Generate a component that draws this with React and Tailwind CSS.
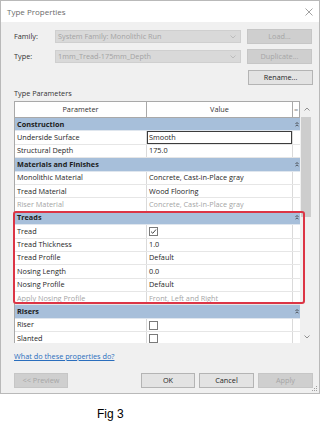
import React from "react";

const rows = [
  { group: true, label: "Construction" },
  { label: "Underside Surface", value: "Smooth", edit: true },
  { label: "Structural Depth", value: "175.0" },
  { group: true, label: "Materials and Finishes" },
  { label: "Monolithic Material", value: "Concrete, Cast-in-Place gray" },
  { label: "Tread Material", value: "Wood Flooring" },
  { label: "Riser Material", value: "Concrete, Cast-in-Place gray", muted: true },
  { group: true, label: "Treads" },
  { label: "Tread", check: true, checked: true },
  { label: "Tread Thickness", value: "1.0" },
  { label: "Tread Profile", value: "Default" },
  { label: "Nosing Length", value: "0.0" },
  { label: "Nosing Profile", value: "Default" },
  { label: "Apply Nosing Profile", value: "Front, Left and Right", muted: true },
  { group: true, label: "Risers" },
  { label: "Riser", check: true },
  { label: "Slanted", check: true },
];

function Chevron({ className = "" }) {
  return (
    <svg width="6" height="4" viewBox="0 0 6 4" className={className}>
      <path d="M0.5 0.5 L3 3 L5.5 0.5" fill="none" stroke="currentColor" strokeWidth="0.8" />
    </svg>
  );
}

function Combo({ text }) {
  return (
    <div className="flex items-center justify-between w-[186px] h-[13px] bg-[#d9d9d9] border border-[#cfcfcf] pl-[2px] pr-[4px] text-[#a3a3a3]">
      <span>{text}</span>
      <Chevron className="text-[#b5b5b5]" />
    </div>
  );
}

function Button({ children, disabled, className = "" }) {
  return (
    <div
      className={
        "flex items-center justify-center h-[15px] border " +
        (disabled
          ? "bg-[#cfcfcf] border-[#c6c6c6] text-[#a6a6a6] "
          : "bg-[#e3e3e3] border-[#b4b4b4] text-[#262626] ") +
        className
      }
    >
      {children}
    </div>
  );
}

function CheckBox({ checked }) {
  return (
    <div className="w-[9px] h-[9px] border border-[#7a7a7a] bg-white flex items-center justify-center">
      {checked && (
        <svg width="7" height="7" viewBox="0 0 7 7">
          <path d="M1 3.6 L2.8 5.3 L6 1.5" fill="none" stroke="#333" strokeWidth="0.9" />
        </svg>
      )}
    </div>
  );
}

function GroupIcon() {
  return (
    <svg width="4" height="5" viewBox="0 0 4 5">
      <path d="M0.5 2 L2 0.5 L3.5 2" fill="none" stroke="#333" strokeWidth="0.8" />
      <path d="M0.5 4.3 L2 2.8 L3.5 4.3" fill="none" stroke="#333" strokeWidth="0.8" />
    </svg>
  );
}

function Row({ row }) {
  if (row.group) {
    return (
      <div className="flex items-center h-[13.4px] bg-[#a7bfda] border-b border-[#dfe6ee]">
        <div className="w-[278px] pl-[2px] font-bold text-[#1c1c1c]">{row.label}</div>
        <div className="w-[7px] flex justify-center">
          <GroupIcon />
        </div>
      </div>
    );
  }
  const txt = row.muted ? "text-[#a5a5a5]" : "text-[#262626]";
  return (
    <div className="flex h-[13.4px] bg-white border-b border-[#e6e6e6]">
      <div className={"w-[132px] pl-[2px] flex items-center border-r border-[#dadada] " + txt}>
        {row.label}
      </div>
      <div className={"w-[146px] flex items-center border-r border-[#dadada] " + txt}>
        {row.check ? (
          <div className="pl-[2px]">
            <CheckBox checked={row.checked} />
          </div>
        ) : row.edit ? (
          <div className="w-full h-full border border-[#3c3c3c] pl-[1px] flex items-center">
            {row.value}
          </div>
        ) : (
          <span className="pl-[2px]">{row.value}</span>
        )}
      </div>
      <div className="w-[7px]" />
    </div>
  );
}

export default function App() {
  return (
    <div className="w-[321px] h-[430px] bg-white text-[7.3px] leading-none font-['Open_Sans',sans-serif] overflow-hidden">
      <div className="relative w-[320px] h-[394px] border border-[#b9b9b9] bg-[#f0f0f0] flex flex-col">
        <div className="h-[21px] bg-white flex items-center justify-between pl-[6px] pr-[6px]">
          <span className="text-[8px] text-[#6a6a6a]">Type Properties</span>
          <svg width="8" height="8" viewBox="0 0 8 8">
            <path d="M0.5 0.5 L7.5 7.5 M7.5 0.5 L0.5 7.5" stroke="#8a8a8a" strokeWidth="0.8" />
          </svg>
        </div>

        <div className="flex flex-col pl-[13px] pr-[6px]">
          <div className="flex items-center mt-[7px] h-[15px]">
            <span className="w-[41px] text-[#333]">Family:</span>
            <Combo text="System Family: Monolithic Run" />
            <Button disabled className="ml-[6px] w-[65px]">Load...</Button>
          </div>
          <div className="flex items-center mt-[5px] h-[15px]">
            <span className="w-[41px] text-[#333]">Type:</span>
            <Combo text="1mm_Tread-175mm_Depth" />
            <Button disabled className="ml-[6px] w-[65px]">Duplicate...</Button>
          </div>
          <div className="flex justify-end mt-[6px]">
            <Button className="w-[65px]">Rename...</Button>
          </div>

          <div className="mt-[5px] h-[9px] text-[#333]">Type Parameters</div>

          <div className="relative mt-[2px] flex h-[242px]">
            <div className="w-[286px] border-l border-t border-[#a9a9a9] overflow-hidden">
              <div className="flex h-[16px] bg-white border-b border-[#a9a9a9] text-[#333]">
                <div className="w-[132px] flex items-center justify-center border-r border-[#a9a9a9]">Parameter</div>
                <div className="w-[146px] flex items-center justify-center border-r border-[#a9a9a9]">Value</div>
                <div className="w-[7px] flex items-center justify-center border-r border-[#a9a9a9] text-[#888]">=</div>
              </div>
              {rows.map((r, i) => (
                <Row key={i} row={r} />
              ))}
            </div>
            <div className="w-[13px] flex flex-col bg-[#f0f0f0]">
              <div className="h-[16px] flex items-center justify-center text-[#777]">
                <Chevron className="rotate-180" />
              </div>
              <div className="ml-[1px] w-[10px] h-[100px] bg-[#cdcdcd]" />
              <div className="flex-1" />
              <div className="h-[12px] flex items-center justify-center text-[#777]">
                <Chevron />
              </div>
            </div>
            <div className="absolute left-[-1px] top-[110px] w-[292px] h-[93px] border-[2px] border-[#dc3545] rounded-[3px]" />
          </div>

          <div className="mt-[10px] h-[9px]">
            <span className="text-[#2a6ebd] underline">What do these properties do?</span>
          </div>

          <div className="flex mt-[11px]">
            <Button disabled className="w-[54px]">&lt;&lt; Preview</Button>
            <div className="ml-auto flex gap-[4px]">
              <Button className="w-[54px]">OK</Button>
              <Button className="w-[55px]">Cancel</Button>
              <Button disabled className="w-[55px]">Apply</Button>
            </div>
          </div>
        </div>

        <svg width="6" height="6" viewBox="0 0 6 6" className="absolute right-[1px] bottom-[1px]">
          <rect x="4" y="0" width="1" height="1" fill="#a0a0a0" />
          <rect x="2" y="2" width="1" height="1" fill="#a0a0a0" />
          <rect x="4" y="2" width="1" height="1" fill="#a0a0a0" />
          <rect x="0" y="4" width="1" height="1" fill="#a0a0a0" />
          <rect x="2" y="4" width="1" height="1" fill="#a0a0a0" />
          <rect x="4" y="4" width="1" height="1" fill="#a0a0a0" />
        </svg>
      </div>
      <div className="mt-[14px] pl-[97px] text-[12px] text-black font-['Liberation_Sans',sans-serif]">Fig 3</div>
    </div>
  );
}
